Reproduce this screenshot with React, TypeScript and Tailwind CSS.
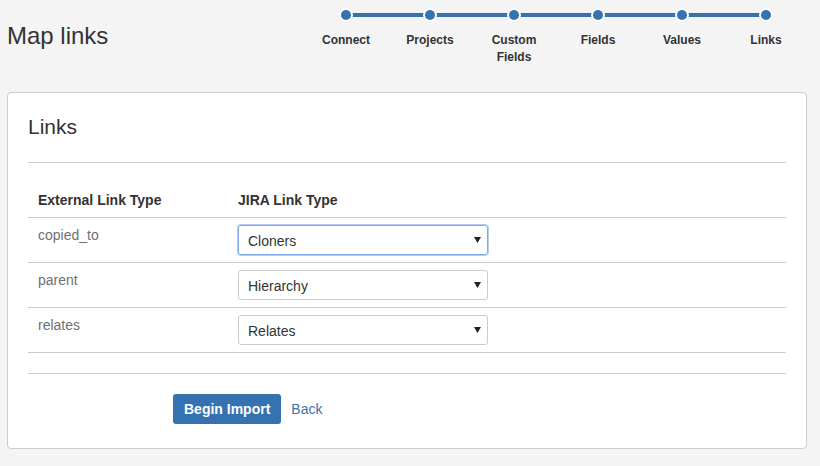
import React from "react";

const steps: string[][] = [
  ["Connect"],
  ["Projects"],
  ["Custom", "Fields"],
  ["Fields"],
  ["Values"],
  ["Links"],
];

const rows = [
  { ext: "copied_to", jira: "Cloners", focus: true },
  { ext: "parent", jira: "Hierarchy", focus: false },
  { ext: "relates", jira: "Relates", focus: false },
];

function Caret() {
  return (
    <svg width="7" height="6" viewBox="0 0 7 6" className="shrink-0">
      <path d="M0 0 H7 L3.5 6 Z" fill="#222" />
    </svg>
  );
}

export default function App() {
  return (
    <div
      className="w-[820px] h-[466px] bg-[#f4f4f4] text-[#333] overflow-hidden"
      style={{ fontFamily: '"Liberation Sans", Arial, sans-serif' }}
    >
      <div className="flex items-start h-[65px]">
        <h1 className="ml-[7px] mt-[21px] text-[24px] leading-[30px] font-normal text-[#333]">
          Map links
        </h1>
        <div className="ml-auto mr-[12px] mt-[8px] relative flex">
          <div className="absolute left-[42px] right-[42px] top-[5px] h-[4px] bg-[#3572b0]" />
          {steps.map((s, i) => (
            <div key={i} className="w-[84px] flex flex-col items-center relative">
              <div className="w-[14px] h-[14px] rounded-full bg-white flex items-center justify-center">
                <div className="w-[10px] h-[10px] rounded-full bg-[#3572b0]" />
              </div>
              <div className="mt-[10px] text-[12px] leading-[17px] font-bold text-center text-[#333]">
                {s.map((l, j) => (
                  <div key={j}>{l}</div>
                ))}
              </div>
            </div>
          ))}
        </div>
      </div>

      <div className="mx-[7px] mt-[27px] w-[800px] h-[357px] bg-white border border-[#cccccc] rounded-[4px] px-[20px] pt-[20px]">
        <h2 className="text-[21px] leading-[28px] font-normal text-[#333]">Links</h2>
        <div className="mt-[21px] h-px bg-[#cccccc]" />

        <div className="mt-[17px]">
          <div className="flex h-[38px] border-b border-[#cccccc] text-[14px] font-bold text-[#333]">
            <div className="w-[200px] pl-[10px] pt-[10px] leading-[20px]">External Link Type</div>
            <div className="pl-[10px] pt-[10px] leading-[20px]">JIRA Link Type</div>
          </div>
          {rows.map((r) => (
            <div key={r.ext} className="flex h-[45px] border-b border-[#cccccc] items-start">
              <div className="w-[200px] pl-[10px] pt-[7px] leading-[20px] text-[14px] text-[#707070]">
                {r.ext}
              </div>
              <div className="pl-[10px]">
                <div
                  className={
                    r.focus
                      ? "mt-[7px] w-[250px] h-[30px] rounded-[3px] border border-[#80a9ee] shadow-[0_0_0_1px_#b3cdf6] flex items-center justify-between pl-[9px] pr-[6px] text-[14px] text-[#333]"
                      : "mt-[7px] w-[250px] h-[30px] rounded-[3px] border border-[#cccccc] flex items-center justify-between pl-[9px] pr-[6px] text-[14px] text-[#333]"
                  }
                >
                  <span className="mt-[2px]">{r.jira}</span>
                  <Caret />
                </div>
              </div>
            </div>
          ))}
        </div>

        <div className="mt-[20px] h-px bg-[#cccccc]" />

        <div className="mt-[20px] flex items-center ml-[145px]">
          <button className="h-[30px] px-[11px] bg-[#3572b0] rounded-[3px] text-white font-bold text-[14px] leading-[30px]">
            Begin Import
          </button>
          <a className="ml-[10px] text-[14px] text-[#3b73af]">Back</a>
        </div>
      </div>
    </div>
  );
}
